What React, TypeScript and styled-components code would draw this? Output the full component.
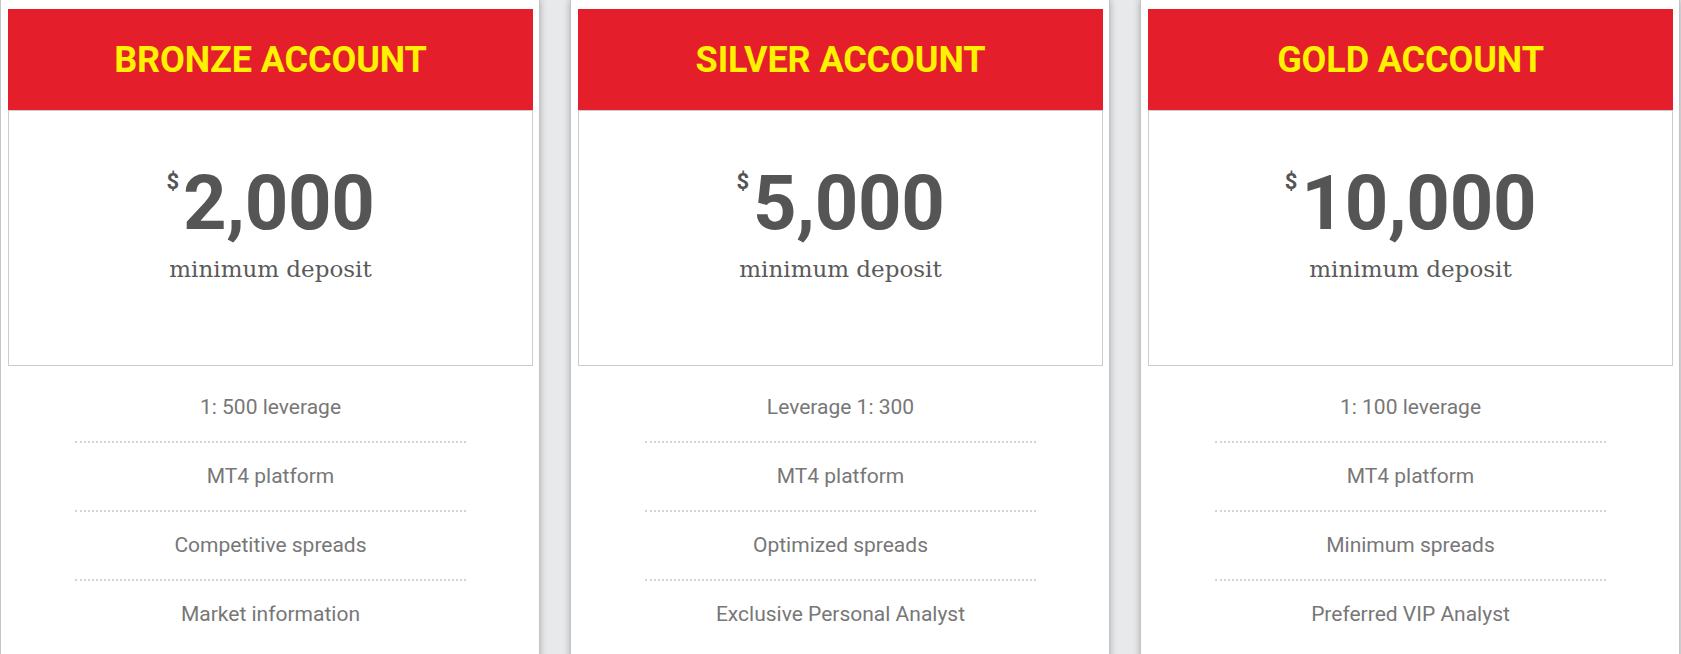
import React from "react";
import styled, { createGlobalStyle } from "styled-components";

const GlobalStyle = createGlobalStyle`
  html, body {
    margin: 0;
    padding: 0;
    background: #e8e9eb;
    overflow: hidden;
  }
  * { box-sizing: border-box; }
`;

const Plans = styled.div`
  display: grid;
  grid-template-columns: repeat(3, 540px);
  column-gap: 30px;
  align-items: start;
`;

const Card = styled.div`
  background: #ffffff;
  border-left: 1px solid #c4c4c4;
  border-right: 1px solid #c4c4c4;
  box-shadow: 0 0 7px rgba(0, 0, 0, 0.28);
  padding: 9px 6px 0 7px;
  height: 700px;
  display: flex;
  flex-direction: column;
`;

const Header = styled.div`
  background: #e41f2b;
  height: 101px;
  display: flex;
  align-items: center;
  justify-content: center;
`;

const Title = styled.h2`
  margin: 0;
  font-family: Roboto, "Liberation Sans", sans-serif;
  font-weight: 700;
  font-size: 36px;
  color: #fff200;
  letter-spacing: -0.1px;
`;

const PriceBox = styled.div`
  border: 1px solid #cccccc;
  height: 256px;
  display: flex;
  flex-direction: column;
  align-items: center;
  padding-top: 54px;
`;

const PriceRow = styled.div`
  display: flex;
  align-items: flex-start;
  color: #555555;
  font-family: Roboto, "Liberation Sans", sans-serif;
  font-weight: 700;
`;

const Currency = styled.span`
  font-size: 22px;
  line-height: 1;
  margin-top: 6px;
  margin-right: 4px;
`;

const Amount = styled.span`
  font-size: 76px;
  line-height: 76px;
  letter-spacing: -0.3px;
`;

const Caption = styled.div`
  margin-top: 13px;
  font-family: "DejaVu Serif", "Liberation Serif", serif;
  font-size: 23px;
  color: #5a5a5a;
  line-height: 30px;
`;

const Features = styled.ul`
  list-style: none;
  margin: 8px 0 0;
  padding: 0 67px 0 67px;
`;

const Feature = styled.li`
  font-family: Roboto, "Liberation Sans", sans-serif;
  font-size: 21px;
  color: #777777;
  text-align: center;
  line-height: 35px;
  padding: 16px 0;
  border-bottom: 2px dotted #d4d4d4;
  &:last-child {
    border-bottom: none;
  }
`;

type Plan = {
  title: string;
  amount: string;
  features: string[];
};

const plans: Plan[] = [
  {
    title: "BRONZE ACCOUNT",
    amount: "2,000",
    features: ["1: 500 leverage", "MT4 platform", "Competitive spreads", "Market information"],
  },
  {
    title: "SILVER ACCOUNT",
    amount: "5,000",
    features: ["Leverage 1: 300", "MT4 platform", "Optimized spreads", "Exclusive Personal Analyst"],
  },
  {
    title: "GOLD ACCOUNT",
    amount: "10,000",
    features: ["1: 100 leverage", "MT4 platform", "Minimum spreads", "Preferred VIP Analyst"],
  },
];

export default function App() {
  return (
    <>
      <GlobalStyle />
      <Plans>
        {plans.map((p) => (
          <Card key={p.title}>
            <Header>
              <Title>{p.title}</Title>
            </Header>
            <PriceBox>
              <PriceRow>
                <Currency>$</Currency>
                <Amount>{p.amount}</Amount>
              </PriceRow>
              <Caption>minimum deposit</Caption>
            </PriceBox>
            <Features>
              {p.features.map((f) => (
                <Feature key={f}>{f}</Feature>
              ))}
            </Features>
          </Card>
        ))}
      </Plans>
    </>
  );
}
